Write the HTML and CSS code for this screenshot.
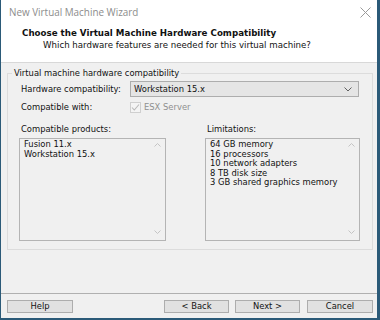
FILE: index.html
```html
<!DOCTYPE html>
<html>
<head>
<meta charset="utf-8">
<link rel="stylesheet" href="styles.css">
</head>
<body>
<div class="window">
  <div class="titlebar">
    <span class="title">New Virtual Machine Wizard</span>
    <svg class="close" width="11" height="11" viewBox="0 0 11 11"><path d="M0.5 0.5 L10.5 10.5 M10.5 0.5 L0.5 10.5" stroke="#9a9a9a" stroke-width="1" fill="none"/></svg>
  </div>
  <div class="header">
    <div class="heading">Choose the Virtual Machine Hardware Compatibility</div>
    <div class="subheading">Which hardware features are needed for this virtual machine?</div>
  </div>
  <div class="main">
    <fieldset class="group">
      <legend class="legend">Virtual machine hardware compatibility</legend>
      <div class="inner">
        <div class="row">
          <span class="label">Hardware compatibility:</span>
          <div class="combo">
            <span>Workstation 15.x</span>
            <svg width="8" height="5" viewBox="0 0 8 5"><path d="M0.5 0.5 L4 4 L7.5 0.5" stroke="#606060" fill="none"/></svg>
          </div>
        </div>
        <div class="row row2">
          <span class="label">Compatible with:</span>
          <div class="check">
            <svg width="11" height="11" viewBox="0 0 11 11"><rect x="0.5" y="0.5" width="10" height="10" fill="#f4f4f4" stroke="#cfcfcf"/><path d="M2 5.5 L4.3 8 L9 2.5" stroke="#b8b8b8" stroke-width="1.1" fill="none"/></svg>
            <span class="disabled">ESX Server</span>
          </div>
        </div>
        <div class="lists">
          <div class="listcol left">
            <div class="label">Compatible products:</div>
            <div class="listbox">
              <div class="items">
                <div>Fusion 11.x</div>
                <div>Workstation 15.x</div>
              </div>
              <div class="scroll">
                <svg width="7" height="4" viewBox="0 0 7 4"><path d="M0.5 3.5 L3.5 0.5 L6.5 3.5" stroke="#c4c4c4" fill="none"/></svg>
                <svg width="7" height="4" viewBox="0 0 7 4"><path d="M0.5 0.5 L3.5 3.5 L6.5 0.5" stroke="#c4c4c4" fill="none"/></svg>
              </div>
            </div>
          </div>
          <div class="listcol right">
            <div class="label">Limitations:</div>
            <div class="listbox">
              <div class="items">
                <div>64 GB memory</div>
                <div>16 processors</div>
                <div>10 network adapters</div>
                <div>8 TB disk size</div>
                <div>3 GB shared graphics memory</div>
              </div>
              <div class="scroll">
                <svg width="7" height="4" viewBox="0 0 7 4"><path d="M0.5 3.5 L3.5 0.5 L6.5 3.5" stroke="#c4c4c4" fill="none"/></svg>
                <svg width="7" height="4" viewBox="0 0 7 4"><path d="M0.5 0.5 L3.5 3.5 L6.5 0.5" stroke="#c4c4c4" fill="none"/></svg>
              </div>
            </div>
          </div>
        </div>
      </div>
    </fieldset>
  </div>
  <div class="footer">
    <button class="btn help">Help</button>
    <div class="nav">
      <button class="btn">&lt; Back</button>
      <button class="btn">Next &gt;</button>
      <button class="btn cancel">Cancel</button>
    </div>
  </div>
</div>
</body>
</html>
```

FILE: styles.css
```css
html, body {
  margin: 0;
  padding: 0;
}
body {
  background: #2b5a78;
  width: 380px;
  height: 320px;
  overflow: hidden;
  font-family: "DejaVu Sans", sans-serif;
  font-size: 8.4px;
  color: #111;
}
.window {
  margin-left: 1px;
  width: 376px;
  height: 318px;
  background: #f0f0f0;
  display: flex;
  flex-direction: column;
}
.titlebar {
  height: 24px;
  background: #fff;
  display: flex;
  align-items: center;
  justify-content: space-between;
  padding: 0 6px 0 8px;
}
.title {
  font-family: "Open Sans", sans-serif;
  font-size: 9.9px;
  color: #8c8c8c;
}
.close {
  display: block;
}
.header {
  background: #fff;
  border-bottom: 1px solid #d8d8d8;
  padding: 4px 0 0 21px;
  box-sizing: border-box;
  height: 39px;
}
.heading {
  font-weight: bold;
  font-size: 8.7px;
  line-height: 11px;
}
.subheading {
  font-size: 8.65px;
  line-height: 11px;
  margin-top: 1px;
  padding-left: 21px;
}
.main {
  flex: 1;
  padding: 5px 4px 0 6px;
}
.group {
  margin: 0;
  padding: 0;
  border: 1px solid #dcdcdc;
  min-width: 0;
}
.legend {
  margin-left: 4px;
  padding: 0 2px;
  line-height: 10px;
}
.inner {
  padding: 3px 12px 8px 11px;
}
.row {
  display: flex;
  align-items: center;
}
.row .label {
  width: 109px;
  padding-left: 2px;
}
.combo {
  width: 229px;
  height: 16px;
  box-sizing: border-box;
  border: 1px solid #adadad;
  background: #e5e5e5;
  display: flex;
  align-items: center;
  justify-content: space-between;
  padding: 0 6px 0 3px;
}
.combo svg {
  display: block;
}
.row2 {
  margin-top: 4px;
  height: 12px;
}
.check {
  display: flex;
  align-items: center;
  gap: 3px;
}
.check svg {
  display: block;
}
.disabled {
  color: #8f8f8f;
}
.lists {
  display: flex;
  justify-content: space-between;
  margin-top: 11px;
}
.listcol .label {
  padding-left: 2px;
  line-height: 10px;
  margin-bottom: 4px;
}
.listcol.left {
  width: 147px;
}
.listcol.right {
  width: 155px;
}
.listbox {
  height: 103px;
  box-sizing: border-box;
  border: 1px solid #b4b4b4;
  display: flex;
}
.items {
  flex: 1;
  padding: 1px 0 0 4px;
  line-height: 9.6px;
}
.scroll {
  width: 16px;
  display: flex;
  flex-direction: column;
  justify-content: space-between;
  align-items: center;
  padding: 4px 0 6px;
}
.scroll svg {
  display: block;
}
.footer {
  height: 25px;
  box-sizing: border-box;
  border-top: 1px solid #b0b0b0;
  padding: 6px 4px 5px 6px;
  display: flex;
  justify-content: space-between;
}
.nav {
  display: flex;
  gap: 6px;
}
.btn {
  font-family: "DejaVu Sans", sans-serif;
  font-size: 8.4px;
  color: #111;
  height: 13px;
  width: 65px;
  padding: 0;
  margin: 0;
  border: 1px solid #adadad;
  background: #e1e1e1;
  line-height: 11px;
}
.btn.help {
  width: 66px;
}
.btn.cancel {
  width: 66px;
  margin-left: 1px;
}
```
